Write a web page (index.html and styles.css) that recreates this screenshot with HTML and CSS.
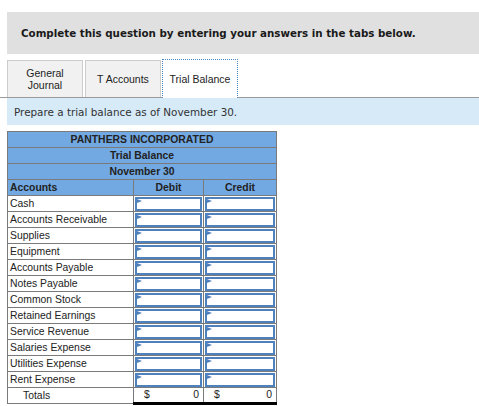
FILE: index.html
```html
<!DOCTYPE html>
<html>
<head>
<meta charset="utf-8">
<link rel="stylesheet" href="styles.css">
</head>
<body>
<div class="page">
  <div class="notice">Complete this question by entering your answers in the tabs below.</div>
  <div class="tabs">
    <div class="tab">General<br>Journal</div>
    <div class="tab">T Accounts</div>
    <div class="tab active">Trial Balance</div>
  </div>
  <div class="instr">Prepare a trial balance as of November 30.</div>
  <table class="tb">
    <colgroup><col class="c1"><col class="c2"><col class="c3"></colgroup>
    <tr class="hd"><th colspan="3">PANTHERS INCORPORATED</th></tr>
    <tr class="hd"><th colspan="3">Trial Balance</th></tr>
    <tr class="hd"><th colspan="3">November 30</th></tr>
    <tr class="hd"><th class="left">Accounts</th><th>Debit</th><th>Credit</th></tr>
    <tr><td class="acct">Cash</td><td class="in"><span class="box"></span></td><td class="in"><span class="box"></span></td></tr>
    <tr><td class="acct">Accounts Receivable</td><td class="in"><span class="box"></span></td><td class="in"><span class="box"></span></td></tr>
    <tr><td class="acct">Supplies</td><td class="in"><span class="box"></span></td><td class="in"><span class="box"></span></td></tr>
    <tr><td class="acct">Equipment</td><td class="in"><span class="box"></span></td><td class="in"><span class="box"></span></td></tr>
    <tr><td class="acct">Accounts Payable</td><td class="in"><span class="box"></span></td><td class="in"><span class="box"></span></td></tr>
    <tr><td class="acct">Notes Payable</td><td class="in"><span class="box"></span></td><td class="in"><span class="box"></span></td></tr>
    <tr><td class="acct">Common Stock</td><td class="in"><span class="box"></span></td><td class="in"><span class="box"></span></td></tr>
    <tr><td class="acct">Retained Earnings</td><td class="in"><span class="box"></span></td><td class="in"><span class="box"></span></td></tr>
    <tr><td class="acct">Service Revenue</td><td class="in"><span class="box"></span></td><td class="in"><span class="box"></span></td></tr>
    <tr><td class="acct">Salaries Expense</td><td class="in"><span class="box"></span></td><td class="in"><span class="box"></span></td></tr>
    <tr><td class="acct">Utilities Expense</td><td class="in"><span class="box"></span></td><td class="in"><span class="box"></span></td></tr>
    <tr><td class="acct">Rent Expense</td><td class="in"><span class="box"></span></td><td class="in"><span class="box"></span></td></tr>
    <tr class="totals"><td class="acct tot">Totals</td><td class="amt"><span>$</span><span>0</span></td><td class="amt"><span>$</span><span>0</span></td></tr>
  </table>
</div>
</body>
</html>
```

FILE: styles.css
```css
html, body {
  margin: 0;
  background: #ffffff;
}
.page {
  padding: 12px 0 0 7px;
}
.notice {
  background: #e0e0e0;
  height: 42px;
  display: flex;
  align-items: center;
  padding-left: 14px;
  font-family: "DejaVu Sans", Verdana, sans-serif;
  font-weight: bold;
  font-size: 10.3px;
  color: #1a1a1a;
}
.tabs {
  display: flex;
  gap: 2px;
  margin-top: 6px;
  height: 37px;
  border-bottom: 1px solid #9a9a9a;
  margin-left: -7px;
  padding-left: 7px;
}
.tab {
  box-sizing: border-box;
  width: 76px;
  height: 37px;
  background: #f1f1f1;
  border: 1px solid #cccccc;
  border-bottom: none;
  display: flex;
  align-items: center;
  justify-content: center;
  text-align: center;
  font-family: "Liberation Sans", Arial, sans-serif;
  font-size: 10.5px;
  line-height: 12px;
  color: #222222;
}
.tab.active {
  background: #ffffff;
  border: 1px dotted #4a86c8;
  border-bottom: none;
  height: 39px;
  margin-top: -1px;
  margin-left: -1px;
}
.instr {
  background: #d6eaf8;
  height: 27px;
  display: flex;
  align-items: center;
  padding-left: 7px;
  font-family: "DejaVu Sans", Verdana, sans-serif;
  font-size: 10.4px;
  color: #333333;
}
.tb {
  margin-top: 6px;
  border-collapse: collapse;
  width: 269px;
  table-layout: fixed;
  font-family: "Liberation Sans", Arial, sans-serif;
  font-size: 10.4px;
  color: #222222;
}
.c1 { width: 126px; }
.c2 { width: 70px; }
.c3 { width: 73px; }
.tb th, .tb td {
  border: 1px solid #7a7a7a;
  height: 15px;
  padding: 0;
  box-sizing: border-box;
  line-height: 14px;
}
.tb tr { height: 16px; }
.hd th {
  background: #72a9e2;
  font-weight: bold;
  text-align: center;
  color: #222222;
}
.hd th.left {
  text-align: left;
  padding-left: 2px;
}
.acct {
  padding-left: 2px !important;
  white-space: nowrap;
  overflow: hidden;
}
.acct.tot {
  padding-left: 15px !important;
}
.in {
  padding: 0 1px !important;
}
.box {
  display: block;
  position: relative;
  box-sizing: border-box;
  height: 14px;
  border: 2px solid #4f81bd;
  background: #ffffff;
}
.box::before {
  content: "";
  position: absolute;
  left: 0;
  top: 0;
  width: 0;
  height: 0;
  border-left: 5px solid #4f81bd;
  border-top: 2px solid transparent;
  border-bottom: 2px solid transparent;
}
.amt {
  border-bottom: 3px solid #000000 !important;
  padding: 0 4px 0 10px !important;
}
.amt span:first-child {
  float: left;
}
.amt span:last-child {
  float: right;
}
```
